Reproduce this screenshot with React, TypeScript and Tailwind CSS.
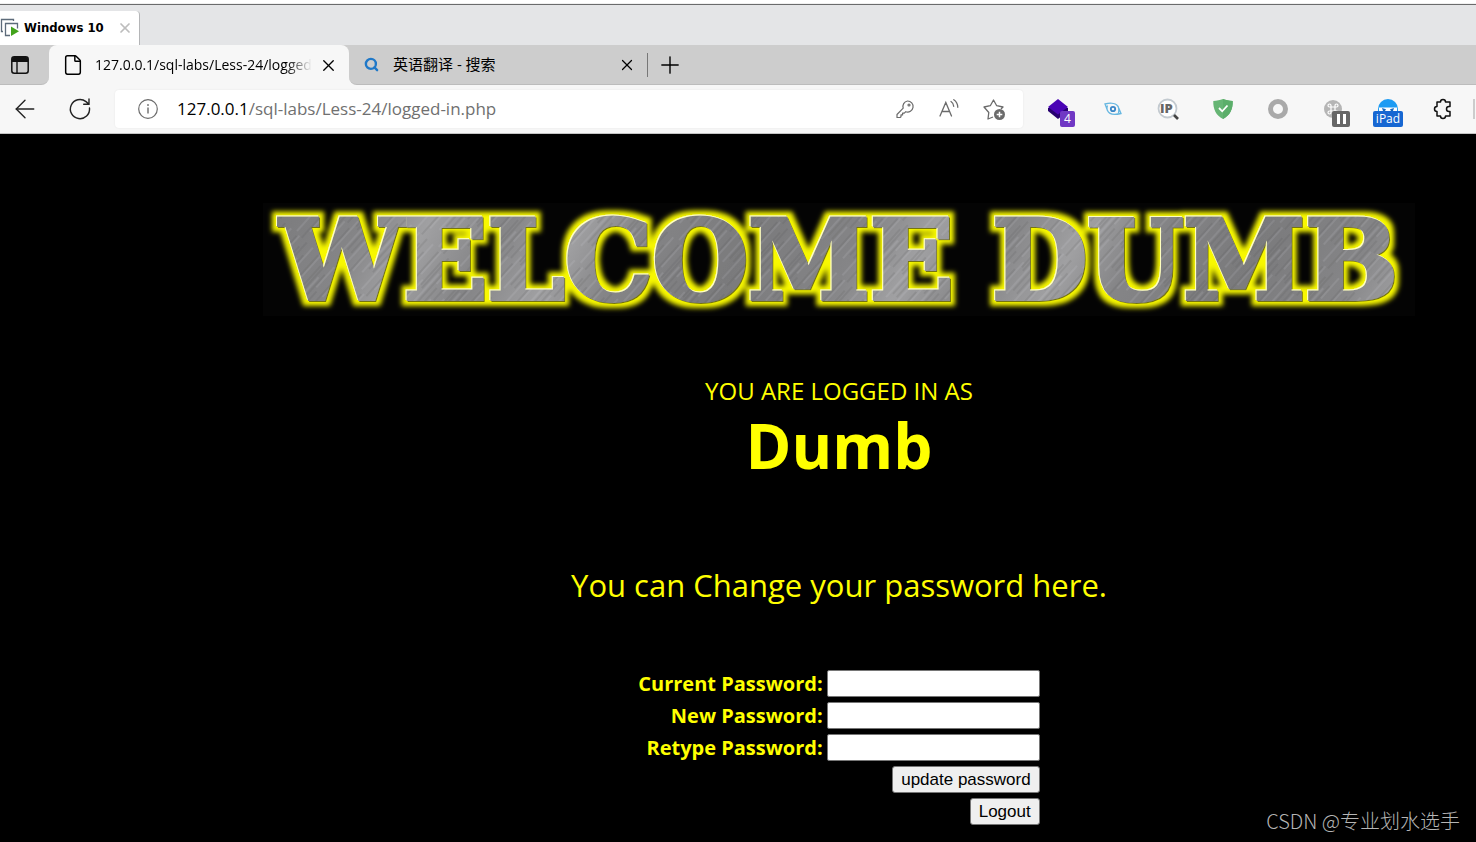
import { ArrowLeft, File, Plus, Search, X } from "lucide-react";

const iconButton = "flex shrink-0 items-center justify-center";

function VmIcon() {
  return (
    <svg width="20" height="20" viewBox="0 0 20 20" fill="none" aria-hidden="true">
      <path d="M3 13.5H1.5v-12h12V3" stroke="#5d6b7a" strokeWidth="1.3" />
      <path d="M10 17.5H5.500v-12h12v5" stroke="#5d6b7a" strokeWidth="1.3" />
      <path d="M11 8.500l8 4.700-8 4.700z" fill="#43a31c" />
    </svg>
  );
}

function VmStrip() {
  return (
    <div className="flex h-[45px] flex-col bg-[#e4e5e7]">
      <div className="h-1 border-b border-[#f0f0f0] bg-white" />
      <div className="h-px bg-[#6a6b6c]" />
      <div className="flex flex-1 items-end">
        <div className="flex h-[34px] w-[140px] items-center rounded-tr border-r border-[#b4b5b7] bg-white">
          <VmIcon />
          <span className="ml-1 flex-1 whitespace-nowrap font-['DejaVu_Sans_Condensed','DejaVu_Sans',sans-serif] text-[13px] font-bold text-black">
            Windows 10
          </span>
          <button aria-label="Close virtual machine tab" className={`${iconButton} mr-1.5 size-4 text-[#bdbdbd]`}>
            <X size={16} strokeWidth={2.6} />
          </button>
        </div>
      </div>
    </div>
  );
}

function TabBar() {
  return (
    <div className="flex h-10 bg-[#f7f7f7]">
      <div className="flex w-[49px] items-center rounded-br-lg border-b border-[#bcbcbc] bg-[#cdcdcd] pl-[11px]">
        <button aria-label="Tab actions" className={iconButton}>
          <svg width="18" height="18" viewBox="0 0 18 18" fill="none">
            <rect x="0.800" y="0.800" width="16.400" height="16.400" rx="2.500" stroke="#111" strokeWidth="1.500" />
            <path d="M1 3a2 2 0 0 1 2-2h12a2 2 0 0 1 2 2v3H1z" fill="#111" />
            <path d="M6 6v11" stroke="#111" strokeWidth="1.400" />
          </svg>
        </button>
      </div>
      <div className="flex bg-[#cdcdcd]">
        <div className="flex w-[300px] items-center rounded-t-lg bg-[#f7f7f7] pl-[13px]">
          <File size={22} strokeWidth={1.6} className="text-black" />
          <span className="ml-[11px] w-[217px] overflow-hidden whitespace-nowrap text-sm text-black [mask-image:linear-gradient(to_right,black_88%,transparent)]">
            127.0.0.1/sql-labs/Less-24/logged-in.php
          </span>
          <button aria-label="Close tab" className={`${iconButton} ml-1.5 size-5 text-black`}>
            <X size={19} strokeWidth={1.7} />
          </button>
        </div>
      </div>
      <div className="flex flex-1 items-center rounded-bl-lg border-b border-[#bcbcbc] bg-[#cdcdcd] pl-[15px]">
        <Search size={15} strokeWidth={3.8} className="text-[#1f78c8]" />
        <span className="ml-3.5 flex-1 whitespace-nowrap text-[15px] text-black sm:max-w-[224px]">英语翻译 - 搜索</span>
        <button aria-label="Close search tab" className={`${iconButton} size-5 text-black`}>
          <X size={18} strokeWidth={1.6} />
        </button>
        <span className="ml-2.5 h-6 w-px bg-[#777]" />
        <button aria-label="New tab" className={`${iconButton} ml-2.5 size-6 text-black`}>
          <Plus size={28} strokeWidth={1.2} className="shrink-0" />
        </button>
      </div>
    </div>
  );
}

function AddressBar() {
  return (
    <div className="flex h-[38px] min-w-0 flex-1 items-center rounded bg-white pr-[17px] pl-[22px] shadow-[0_0_2px_rgba(0,0,0,0.08)]">
      <svg width="22" height="22" viewBox="0 0 22 22" fill="none" stroke="#6b6b6b" aria-hidden="true">
        <circle cx="11" cy="11" r="9.300" strokeWidth="1.200" />
        <path d="M11 9.500v6" strokeWidth="1.400" />
        <circle cx="11" cy="7" r="0.500" fill="#6b6b6b" />
      </svg>
      <div className="ml-[18px] flex-1 whitespace-nowrap text-[17px] text-[#707070]">
        <span className="text-black">127.0.0.1</span>/sql-labs/Less-24/logged-in.php
      </div>
      <div className="flex items-center gap-[22px]">
        <button aria-label="Saved passwords" className={iconButton}>
          <svg width="22" height="22" viewBox="0 0 22 22" fill="none" stroke="#6b6b6b" strokeWidth="1.200" strokeLinejoin="round">
            <path d="M13.500 3a5.500 5.500 0 1 1-1.700 10.700L10.300 15.200H8.600v1.700H7v1.800l-.9.800H3v-3l6.200-6.300A5.500 5.500 0 0 1 13.500 3z" />
            <circle cx="15" cy="7" r="1" />
          </svg>
        </button>
        <button aria-label="Read aloud" className={iconButton}>
          <svg width="22" height="22" viewBox="0 0 22 22" fill="none" stroke="#6b6b6b" strokeWidth="1.300" strokeLinecap="round">
            <path d="M2 18L7.800 4.500 13.500 18M4.200 13.500h7.200M13 3.500c1.800 1.200 2.600 2.700 2.700 4.800M15.800 1.700c2.600 1.700 3.900 4.300 4 7.600" />
          </svg>
        </button>
        <button aria-label="Add to favorites" className={iconButton}>
          <svg width="24" height="24" viewBox="0 0 24 24" fill="none" stroke="#6b6b6b" strokeWidth="1.300" strokeLinejoin="round">
            <path d="M11 20l-5 2 .8-6.500L2 10l6.300-1.300L11.500 3l3.200 5.700L21 10l-2 2" />
            <circle cx="17.500" cy="17.500" r="5.500" fill="#6b6b6b" stroke="none" />
            <path d="M17.500 14.700v5.600M14.700 17.500h5.600" stroke="#fff" strokeWidth="1.500" />
          </svg>
        </button>
      </div>
    </div>
  );
}

function Extensions() {
  return (
    <div className="flex h-full shrink-0 items-center">
      <button aria-label="Layers, 4 items" className={`${iconButton} relative w-[55px]`}>
        <svg width="22" height="22" viewBox="0 0 22 22">
          <path d="M1 13l10 8 10-8v-3H1z" fill="#26006e" />
          <path d="M11 1l10 8-10 7.500L1 9z" fill="#4a04b5" />
        </svg>
        <span className="absolute top-[13px] left-[30px] flex h-4 w-[15px] items-center justify-center rounded-xs bg-[#7038c4] text-xs text-white">
          4
        </span>
      </button>
      <button aria-label="Eye" className={`${iconButton} w-[55px]`}>
        <svg width="18" height="14" viewBox="0 0 18 14" fill="none" stroke="#67b7e1" strokeWidth="1.300">
          <path d="M1 2c6-1.500 12-.8 13.500 3.500L17 11.500C10.500 13 5 12.500 3.500 8.500zM3.500 3.500C2.500 6 3 8 4 9.500M14 4c1 2 1 4 .5 7" />
          <circle cx="9" cy="7" r="2.200" stroke="#3a86c8" strokeWidth="1.800" />
        </svg>
      </button>
      <button aria-label="IP lookup" className={`${iconButton} w-[55px]`}>
        <svg width="22" height="22" viewBox="0 0 22 22">
          <circle cx="10.500" cy="10.500" r="9" fill="#fff" stroke="#c3cad0" strokeWidth="1.800" />
          <path d="M17 17l4 4" stroke="#444" strokeWidth="2.600" />
          <text x="3" y="15" fontSize="13" fontWeight="800" fill="#666" fontFamily="Open Sans">IP</text>
        </svg>
      </button>
      <button aria-label="Ad blocker" className={`${iconButton} w-[55px]`}>
        <svg width="20" height="22" viewBox="0 0 20 22">
          <path d="M10 1c3 1 6 1.700 9.700 2C20 11 17 17.500 10 21 3 17.500 0 11 .3 3 4 2.700 7 2 10 1z" fill="#66b574" />
          <path d="M10 1c3 1 6 1.700 9.700 2C20 11 17 17.500 10 21z" fill="#5bae6a" />
          <path d="M6 10l3.200 3.300L14.500 7.500" stroke="#fff" strokeWidth="1.800" fill="none" />
        </svg>
      </button>
      <button aria-label="Recorder" className={`${iconButton} w-[55px]`}>
        <span className="size-5 rounded-full border-[5px] border-[#a9a9a9] bg-[#f7f7f7]" />
      </button>
      <button aria-label="Shortcuts paused" className={`${iconButton} relative w-[55px]`}>
        <svg width="20" height="20" viewBox="0 0 20 20" fill="none">
          <circle cx="10" cy="10" r="9" fill="#b5b5b5" />
          <path d="M8 8h4v4H8zM8 8H6.500A1.500 1.500 0 1 1 8 6.500zM12 8V6.500A1.500 1.500 0 1 1 13.500 8zM12 12h1.500a1.500 1.500 0 1 1-1.500 1.500zM8 12v1.500A1.500 1.500 0 1 1 6.500 12z" stroke="#fff" strokeWidth="1.200" />
        </svg>
        <span className="absolute top-3 left-[27px] flex h-4 w-[18px] items-center justify-center gap-[3px] rounded-xs bg-[#666]">
          <span className="h-2.5 w-[3px] bg-white" />
          <span className="h-2.5 w-[3px] bg-white" />
        </span>
      </button>
      <button aria-label="User agent: iPad" className={`${iconButton} relative w-[55px]`}>
        <svg width="22" height="22" viewBox="0 0 22 22">
          <path d="M1 11a10 10 0 0 1 20 0v6H1z" fill="#1c9bf3" />
          <path d="M2 9.500h18v4H2z" fill="#fff" />
          <path d="M5 10l4 1.200-1 1.800H6zM17 10l-4 1.200 1 1.800h2z" fill="#1768bd" />
        </svg>
        <span className="absolute top-[13px] left-[13px] flex h-4 w-[30px] items-center justify-center rounded-xs bg-[#1767d2] text-xs text-white">
          iPad
        </span>
      </button>
      <button aria-label="Extensions" className={`${iconButton} w-14`}>
        <svg width="22" height="22" viewBox="0 0 22 22" fill="none" stroke="#111" strokeWidth="1.500" strokeLinejoin="round">
          <path d="M5 4h3.500a2.500 2.500 0 0 1 5 0H18v4.500h-1a2.500 2.500 0 0 0 0 5h1V18h-4.500a2.500 2.500 0 0 1-5 0H5v-4.500a2.500 2.500 0 0 1 0-5z" />
        </svg>
      </button>
      <span className="ml-0.5 h-5 w-0.5 bg-[#ccc]" />
    </div>
  );
}

function Toolbar() {
  return (
    <div className="flex h-[49px] items-center border-b border-[#c4c4c4] bg-[#f7f7f7] pr-px pl-3">
      <button aria-label="Back" className={`${iconButton} w-[26px] text-[#222]`}>
        <ArrowLeft size={30} strokeWidth={1.1} className="shrink-0" />
      </button>
      <button aria-label="Refresh" className={`${iconButton} mr-[23px] ml-[30px] w-6`}>
        <svg width="24" height="24" viewBox="0 0 24 24" fill="none" stroke="#222" strokeWidth="1.400" strokeLinecap="round">
          <path d="M21.500 11A9.600 9.600 0 1 1 18 4.600L20.800 7M21 2v5.300h-5.300" />
        </svg>
      </button>
      <AddressBar />
      <div className="w-[7px] shrink-0" />
      <Extensions />
    </div>
  );
}

function WelcomeBanner() {
  return (
    <h1 className="w-full max-w-[1152px] bg-[#040404]">
      <svg viewBox="0 0 1152 113" className="block h-auto w-full overflow-visible">
        <defs>
          <linearGradient id="steel" gradientUnits="userSpaceOnUse" x1="0" y1="0" x2="190" y2="110" spreadMethod="reflect">
            <stop offset="0" stopColor="#7a7a7c" />
            <stop offset="0.450" stopColor="#858587" />
            <stop offset="0.700" stopColor="#a0a0a2" />
            <stop offset="1" stopColor="#848486" />
          </linearGradient>
          <pattern id="brushed" patternUnits="userSpaceOnUse" width="1152" height="113">
            <rect width="1152" height="113" fill="url(#steel)" />
            <rect width="1152" height="113" fill="url(#scratches)" />
          </pattern>
          <pattern id="scratches" patternUnits="userSpaceOnUse" width="29" height="83" patternTransform="rotate(42)">
            <path d="M1 0v40M7 12v49M12 30v31M18 2v39M23 44v39M27 8v30" stroke="#4d4d50" strokeOpacity="0.280" />
            <path d="M4 18v50M9 0v27M15 42v39M20 0v30M25 33v40" stroke="#e5e5e8" strokeOpacity="0.220" />
          </pattern>
          <filter id="glow" filterUnits="userSpaceOnUse" x="0" y="0" width="1152" height="113">
            <feMorphology in="SourceAlpha" operator="dilate" radius="5" result="wide" />
            <feGaussianBlur in="wide" stdDeviation="2.500" result="soft" />
            <feFlood floodColor="#f8f800" />
            <feComposite in2="soft" operator="in" result="halo" />
            <feOffset in="SourceAlpha" dx="-1" dy="-1" result="shift" />
            <feFlood floodColor="#ffffc0" />
            <feComposite in2="shift" operator="in" result="edge" />
            <feOffset in="SourceAlpha" dx="1" dy="1" result="low" />
            <feFlood floodColor="#77760a" />
            <feComposite in2="low" operator="in" result="shade" />
            <feMerge>
              <feMergeNode in="halo" />
              <feMergeNode in="shade" />
              <feMergeNode in="edge" />
              <feMergeNode in="SourceGraphic" />
            </feMerge>
          </filter>
        </defs>
        <text
          x="576"
          y="96"
          textAnchor="middle"
          fontFamily="DejaVu Serif, serif"
          fontWeight="700"
          fontSize="110"
          fill="url(#brushed)"
          stroke="url(#brushed)"
          strokeWidth="4"
          filter="url(#glow)"
        >
          WELCOME DUMB
        </text>
      </svg>
    </h1>
  );
}

const fields = [
  { id: "current-password", label: "Current Password:" },
  { id: "new-password", label: "New Password:" },
  { id: "retype-password", label: "Retype Password:" },
];

const formButton =
  "h-[27px] rounded-[3px] border border-[#767676] bg-[#efefef] px-2 font-['Liberation_Sans',Arial,sans-serif] text-[17px] leading-6 text-black";

function PasswordForm() {
  return (
    <form className="mt-[63px] flex flex-col items-end gap-[5px]" onSubmit={(event) => event.preventDefault()}>
      {fields.map((field) => (
        <div key={field.id} className="flex items-center gap-1">
          <label htmlFor={field.id} className="text-xl leading-[27px] font-bold">
            {field.label}
          </label>
          <input
            id={field.id}
            type="password"
            className="h-[27px] w-[213px] rounded-xs border border-[#767676] bg-white px-1 text-black"
          />
        </div>
      ))}
      <button type="submit" className={formButton}>
        update password
      </button>
      <button type="button" className={formButton}>
        Logout
      </button>
    </form>
  );
}

export default function App() {
  return (
    <div className="flex min-h-screen flex-col overflow-x-hidden bg-black font-['Open_Sans','Noto_Sans_CJK_SC',sans-serif]">
      <header>
        <VmStrip />
        <TabBar />
        <Toolbar />
      </header>
      <main className="relative flex flex-1 flex-col items-center bg-black pt-[69px] pb-4 pl-[202px] text-[#ffff00]">
        <WelcomeBanner />
        <p className="mt-[57px] text-2xl leading-9">YOU ARE LOGGED IN AS</p>
        <p className="text-[62px] leading-[72px] font-bold">Dumb</p>
        <p className="mt-[82px] text-[31px] leading-[44px]">You can Change your password here.</p>
        <PasswordForm />
        <span className="absolute right-4 bottom-[7px] font-['Noto_Sans_CJK_SC',sans-serif] text-xl font-light text-[#b5b5b5]">
          CSDN @专业划水选手
        </span>
      </main>
    </div>
  );
}
